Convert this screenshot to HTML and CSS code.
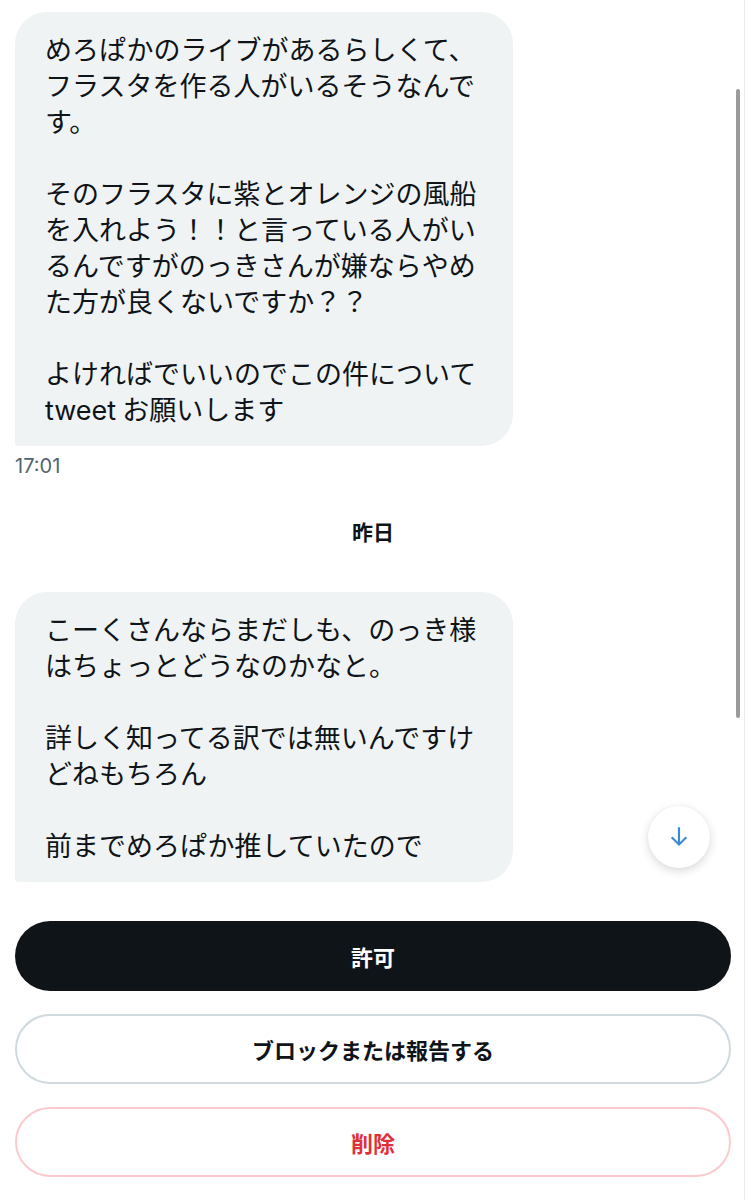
FILE: index.html
```html
<!DOCTYPE html>
<html lang="ja">
<head>
<meta charset="utf-8">
<title>DM</title>
<link rel="stylesheet" href="styles.css">
</head>
<body>
<main class="chat">
  <div class="msg">めろぱかのライブがあるらしくて、フラスタを作る人がいるそうなんです。

そのフラスタに紫とオレンジの風船を入れよう！！と言っている人がいるんですがのっきさんが嫌ならやめた方が良くないですか？？

よければでいいのでこの件について<span class="latin">tweet</span> お願いします</div>
  <div class="time">17:01</div>
  <div class="day">昨日</div>
  <div class="msg">こーくさんならまだしも、のっき様はちょっとどうなのかなと。

詳しく知ってる訳では無いんですけどねもちろん

前までめろぱか推していたので</div>
  <div class="actions">
    <button class="btn btn-primary">許可</button>
    <button class="btn btn-outline">ブロックまたは報告する</button>
    <button class="btn btn-danger">削除</button>
  </div>
</main>
<button class="scroll-down" aria-label="下へ">
  <svg viewBox="0 0 24 24" width="26" height="26"><path d="M13 3v13.586l5.043-5.043 1.414 1.414L12 20.414l-7.457-7.457 1.414-1.414L11 16.586V3h2z" fill="currentColor"/></svg>
</button>
<div class="scrollbar"></div>
<div class="edge"></div>
</body>
</html>
```

FILE: styles.css
```css
html, body {
  margin: 0;
  padding: 0;
  background: #ffffff;
}

body {
  font-family: "Noto Sans CJK JP", "Noto Sans", sans-serif;
  color: #0f1419;
  width: 746px;
  height: 1200px;
  overflow: hidden;
}

.chat {
  padding: 12px 15px 0 15px;
  display: flex;
  flex-direction: column;
}

.msg {
  width: 498px;
  box-sizing: border-box;
  padding: 19px 30px 19px 30px;
  background: #eff3f4;
  border-radius: 32px 32px 32px 4px;
  font-size: 27px;
  line-height: 36px;
  white-space: pre-line;
  color: #0f1419;
}

.latin {
  font-family: "Inter", "Noto Sans CJK JP", sans-serif;
  line-height: 1;
}

.time {
  margin-top: 8px;
  font-family: "Inter", "Noto Sans", sans-serif;
  font-size: 20px;
  line-height: 24px;
  color: #536471;
}

.day {
  margin-top: 41px;
  margin-bottom: 49px;
  text-align: center;
  font-size: 21px;
  line-height: 24px;
  font-weight: 700;
  color: #0f1419;
}

.actions {
  margin-top: 39px;
  display: flex;
  flex-direction: column;
  gap: 23px;
}

.btn {
  height: 70px;
  border-radius: 36px;
  font-family: "Noto Sans CJK JP", sans-serif;
  font-size: 22px;
  font-weight: 700;
  background: #ffffff;
  box-sizing: border-box;
  display: flex;
  align-items: center;
  justify-content: center;
  padding: 0;
}

.btn-primary {
  background: #0f1419;
  color: #ffffff;
  border: 0;
}

.btn-outline {
  border: 2px solid #cfd9de;
  color: #0f1419;
}

.btn-danger {
  border: 2px solid #fdc9ce;
  color: #e0313b;
}

.scroll-down {
  position: absolute;
  left: 648px;
  top: 806px;
  width: 62px;
  height: 62px;
  border-radius: 50%;
  border: 0;
  background: #ffffff;
  color: #3a8ad6;
  box-shadow: 0 3px 10px rgba(0, 0, 0, 0.15), 0 0 2px rgba(0, 0, 0, 0.06);
  display: flex;
  align-items: center;
  justify-content: center;
  padding: 0;
}

.scrollbar {
  position: absolute;
  left: 736px;
  top: 89px;
  width: 4px;
  height: 629px;
  border-radius: 2px;
  background: #9b9b9b;
}

.edge {
  position: absolute;
  left: 744px;
  top: 0;
  width: 1px;
  height: 1200px;
  background: #ececec;
}
```
